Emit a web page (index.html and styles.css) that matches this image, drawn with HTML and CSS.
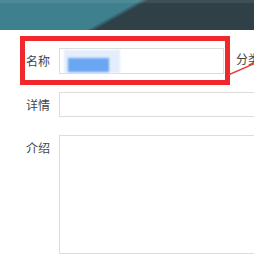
FILE: index.html
```html
<!DOCTYPE html>
<html lang="zh-CN">
<head>
    <meta charset="UTF-8">
    <title>表单</title>
    <link rel="stylesheet" href="styles.css">
</head>
<body>
    <div class="topbar"></div>
    <form class="form">
        <div class="row first">
            <div class="mark">
                <label class="label short">名称</label>
                <div class="field name">
                    <span class="blur-light"></span>
                    <span class="blur-dark"></span>
                </div>
            </div>
            <label class="label side">分类</label>
        </div>
        <div class="row detail">
            <label class="label">详情</label>
            <div class="field wide"></div>
        </div>
        <div class="row intro">
            <label class="label">介绍</label>
            <div class="field area"></div>
        </div>
    </form>
    <svg class="arrow" width="30" height="20" viewBox="0 0 30 20">
        <line x1="0" y1="16" x2="30" y2="3" stroke="#e8393a" stroke-width="1.5"/>
    </svg>
</body>
</html>
```

FILE: styles.css
```css
body {
    margin: 0;
    width: 254px;
    height: 256px;
    overflow: hidden;
    background: #fff;
    font-family: "Noto Sans CJK SC", "Noto Sans", sans-serif;
    font-size: 12px;
    color: #444;
    position: relative;
}

.topbar {
    height: 30px;
    background:
        linear-gradient(to bottom, rgba(255, 255, 255, 0.08) 0, rgba(255, 255, 255, 0.08) 3px, transparent 3px),
        linear-gradient(151deg, #3e808e 0, #3e808e 45.5%, #2f4047 48.5%, #2f4047 100%);
}

.form {
    display: flex;
    flex-direction: column;
}

.row {
    display: flex;
    align-items: flex-start;
}

.first {
    margin-top: 6px;
    margin-left: 20px;
    gap: 6px;
    align-items: center;
}

.mark {
    display: flex;
    align-items: center;
    width: 200px;
    height: 39px;
    border: 5px solid #f0282b;
    padding: 0 1px 0 0;
}

.label {
    width: 50px;
    text-align: right;
    flex: none;
    line-height: 16px;
}

.label.short {
    width: 25px;
}

.label.side {
    width: auto;
    margin-top: -3px;
    white-space: nowrap;
}

.field {
    margin-left: 9px;
    border: 1px solid #dcdcdc;
    background: #fff;
    box-sizing: border-box;
    flex: none;
}

.name {
    width: 165px;
    height: 26px;
    position: relative;
    margin-top: 1px;
}

.blur-light {
    position: absolute;
    left: 4px;
    top: 1px;
    width: 56px;
    height: 23px;
    background: #e3edfb;
    filter: blur(1px);
}

.blur-dark {
    position: absolute;
    left: 8px;
    top: 9px;
    width: 41px;
    height: 14px;
    background: #6aa6f2;
    filter: blur(1px);
}

.detail {
    margin-top: 7px;
    align-items: center;
}

.wide {
    width: 200px;
    height: 25px;
}

.intro {
    margin-top: 18px;
}

.intro .label {
    margin-top: 5px;
}

.area {
    width: 200px;
    height: 119px;
}

.arrow {
    position: absolute;
    left: 228px;
    top: 59px;
}
```
